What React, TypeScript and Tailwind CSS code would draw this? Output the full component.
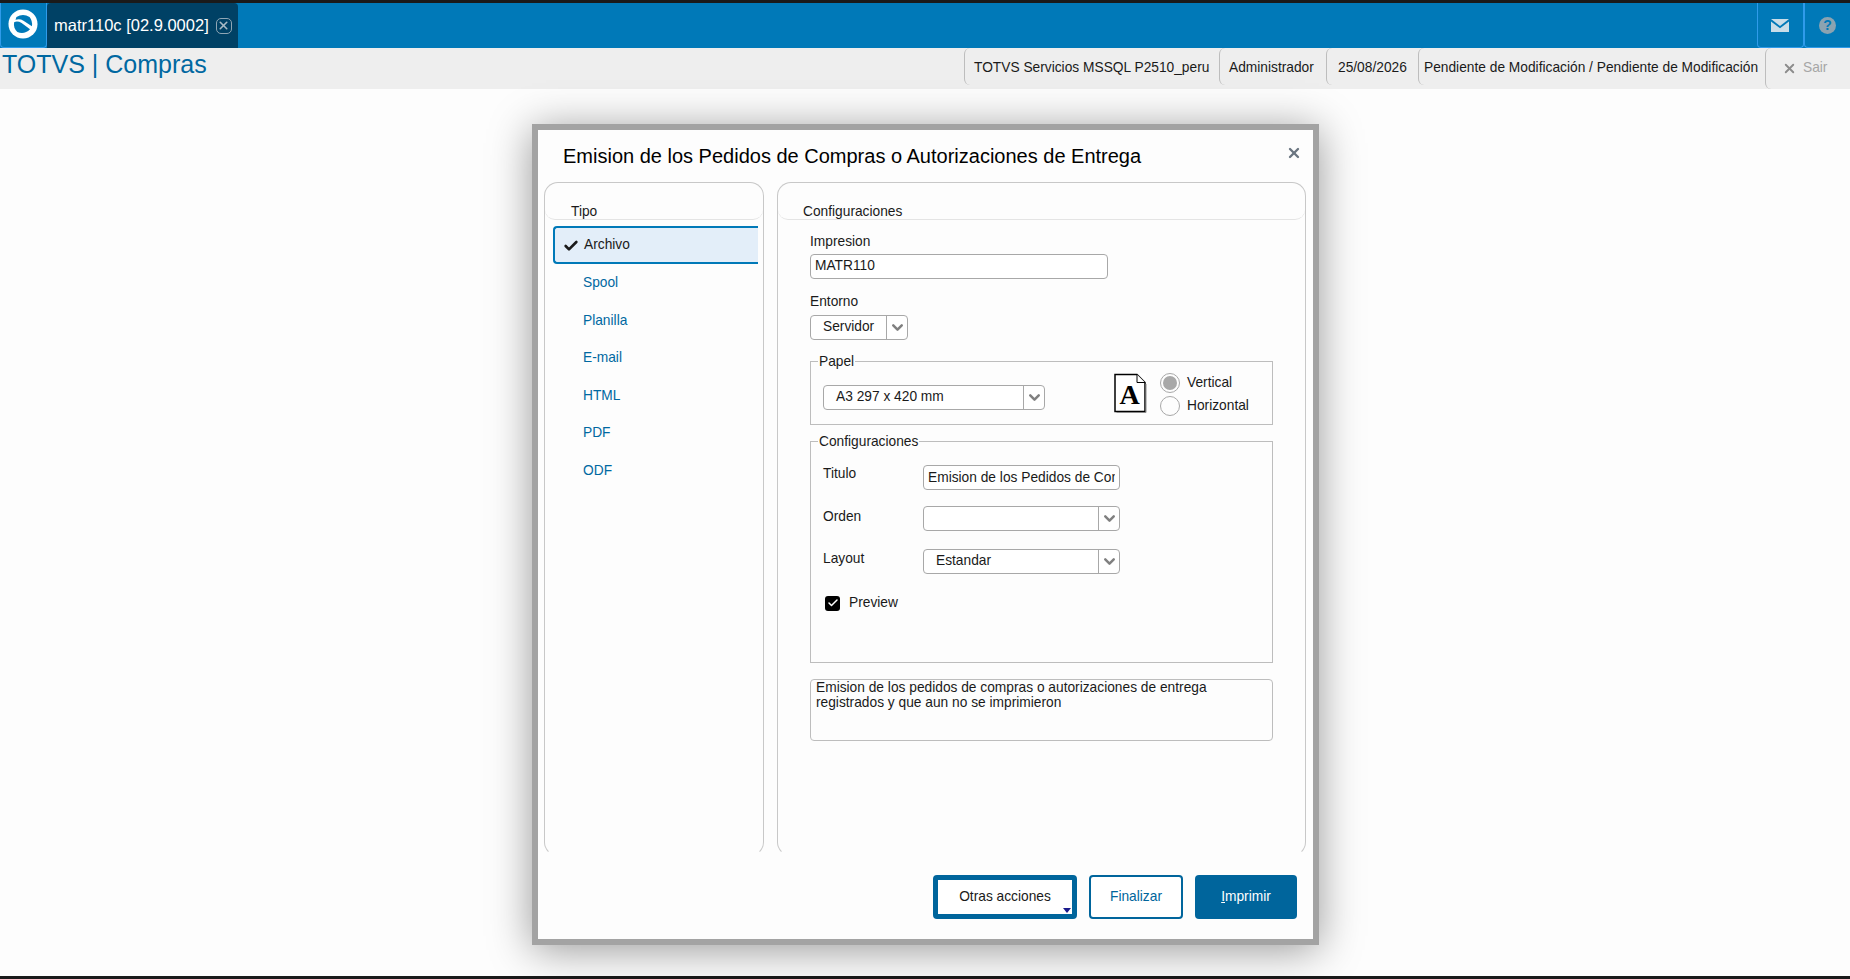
import { Check, ChevronDown, X } from 'lucide-react'

const TIPOS = ['Spool', 'Planilla', 'E-mail', 'HTML', 'PDF', 'ODF']
const INFO = [
  { text: 'TOTVS Servicios MSSQL P2510_peru', w: 'w-[255px]', pad: 'pl-[9px]' },
  { text: 'Administrador', w: 'w-[107px]', pad: 'pl-[9px]' },
  { text: '25/08/2026', w: 'w-[92px]', pad: 'pl-[11px]' },
  { text: 'Pendiente de Modificación / Pendiente de Modificación', w: 'w-[347px]', pad: 'pl-[5px]' },
]

function Combo({ value, w, arrow = 'w-[21px]', pad = 'pl-[12px]' }: { value: string; w: string; arrow?: string; pad?: string }) {
  return (
    <div className={`flex h-[25px] items-stretch rounded-[4px] border border-[#a8a8a8] bg-white ${w}`}>
      <div className={`flex min-w-0 flex-1 items-center text-[#1a1a1a] ${pad}`}>{value}</div>
      <div className={`flex items-center justify-center border-l border-[#a8a8a8] ${arrow}`}>
        <ChevronDown className="size-[17px] text-[#808080]" strokeWidth={3.5} />
      </div>
    </div>
  )
}

function PaperIcon() {
  return (
    <svg width="37" height="41" viewBox="0 0 37 41" className="shrink-0">
      <path d="M1 0H33V40H1Z" fill="#fff" />
      <path d="M2 1.500H24L32 9.500V38.500H2Z" fill="#fff" stroke="#000" strokeWidth="1.500" />
      <path d="M3.500 39.500H33V11" fill="none" stroke="#8a8a8a" strokeWidth="1" />
      <path d="M24 1.500V9.500H32" fill="#fff" stroke="#000" strokeWidth="1" />
      <text x="16.500" y="31" textAnchor="middle" fontFamily="'Liberation Serif', serif" fontWeight="bold" fontSize="28" fill="#000">A</text>
    </svg>
  )
}

export default function App() {
  return (
    <div className="relative flex h-[979px] w-[1850px] flex-col overflow-hidden bg-[#1a1a1a] font-['Liberation_Sans',Arial,sans-serif] text-[13.75px]">

      {/* Top bar */}
      <div className="mt-[3px] flex h-[45px] shrink-0 items-stretch bg-[#0079b8]">
        <div className="flex w-[47px] items-center justify-center rounded-b-[4px] border-x border-b border-[#2f9bea]">
          <svg width="30" height="30" viewBox="0 0 32 32" className="mb-[3px] mr-[2px]">
            <circle cx="16" cy="16" r="15.500" fill="#fff" />
            <path d="M9 8.500Q16 4.500 23 8.500Q26.500 13 25.500 18.500L16.500 12.500Q12.500 10 8 11.500Z" fill="#0079b8" />
            <path d="M6.500 14Q10.500 12.500 14.500 15L23.500 21.500Q17.500 27.500 10 24.500Q5.500 20 6.500 14Z" fill="#0079b8" />
          </svg>
        </div>
        <div className="flex w-[191px] items-center rounded-t-[4px] bg-[#004165] pl-[7px] text-[16.500px] text-white">
          <span>matr110c [02.9.0002]</span>
          <span className="ml-[7px] flex size-[16px] items-center justify-center rounded-[5px] border border-[#8fa6b5]">
            <X className="size-[13px] text-[#a9bac5]" strokeWidth={3} />
          </span>
        </div>
        <div className="flex-1" />
        <div className="flex w-[47px] items-center justify-center rounded-b-[4px] border-x border-b border-[#2f9bea] pr-[2px]">
          <svg width="18" height="13" viewBox="0 0 18 13">
            <path d="M0 0H18L9 7Z" fill="#c9dde8" />
            <path d="M0 2.500L9 9.200L18 2.500V13H0Z" fill="#c9dde8" />
          </svg>
        </div>
        <div className="flex w-[46px] items-center justify-center rounded-bl-[4px] border-b border-l border-[#2f9bea]">
          <span className="flex size-[17px] items-center justify-center rounded-full bg-[#8ba3b1] text-[14px] font-bold text-[#0079b8]">?</span>
        </div>
      </div>

      {/* Title bar */}
      <div className="flex h-[41px] shrink-0 items-stretch justify-between bg-[#eeeeee]">
        <div className="pl-[2px] pt-[2px] text-[25px] leading-[29px] text-[#0068a1]">TOTVS | Compras</div>
        <div className="flex items-stretch pb-[4px] text-[#1a1a1a]">
          {INFO.map(i => (
            <div key={i.text} className={`flex items-center whitespace-nowrap rounded-l-[6px] border-l border-[#bdbdbd] pt-[4px] ${i.w} ${i.pad}`}>{i.text}</div>
          ))}
          <div className="-mb-[4px] flex w-[85px] items-center gap-[6px] rounded-l-[6px] border-l border-[#bdbdbd] pl-[16px] text-[#a6a6a6]">
            <X className="size-[15px] text-[#8c8c8c]" strokeWidth={3} />
            <span>Sair</span>
          </div>
        </div>
      </div>

      {/* Page */}
      <div className="flex h-[887px] shrink-0 flex-col bg-[#fdfdfd] pl-[532px] pt-[35px]">
        <div className="flex h-[821px] w-[787px] flex-col border-[6px] border-[#a3a3a3] bg-[#fdfdfd] shadow-[0_5px_40px_rgba(0,0,0,0.4)]">

          <div className="flex h-[52px] shrink-0 items-center justify-between pl-[25px] pr-[11px]">
            <h1 className="text-[20px] text-black">Emision de los Pedidos de Compras o Autorizaciones de Entrega</h1>
            <X className="mb-[7px] size-[16px] text-[#6a7580]" strokeWidth={3.500} />
          </div>

          <div className="flex h-[674px] shrink-0 gap-[13px] pl-[6px]">

            {/* Tipo */}
            <div className="w-[220px] rounded-[14px] border border-[#c8c8c8] border-b-transparent">
              <div className="flex h-[37px] items-end rounded-b-[10px] border-b border-[#e4e4e4] pl-[26px] leading-[15px] text-[#1a1a1a]">Tipo</div>
              <div className="pl-[8px] pt-[6px]">
                <div className="flex h-[38px] w-[205px] items-center rounded-l-[4px] border-y-2 border-l-2 border-[#0079b8] bg-[#e3eef9] pt-[1px] text-[#1a1a1a]">
                  <Check className="ml-[8px] size-[16px] text-[#1a1a1a]" strokeWidth={4} />
                  <span className="ml-[5px]">Archivo</span>
                </div>
                <div className="pt-[1px]">
                  {TIPOS.map(t => (
                    <div key={t} className="flex h-[37.500px] items-center pl-[30px] text-[#0068a1]">{t}</div>
                  ))}
                </div>
              </div>
            </div>

            {/* Configuraciones */}
            <div className="w-[529px] rounded-[14px] border border-[#c8c8c8] border-b-transparent">
              <div className="flex h-[37px] items-end rounded-b-[10px] border-b border-[#e4e4e4] pl-[25px] leading-[15px] text-[#1a1a1a]">Configuraciones</div>
              <div className="pl-[32px] pt-[14px] text-[#1a1a1a]">
                <div className="leading-[16px]">Impresion</div>
                <div className="mt-[4px] flex h-[25px] w-[298px] items-center rounded-[4px] border border-[#a8a8a8] bg-white pl-[4px] text-[#1a1a1a]">MATR110</div>
                <div className="mt-[15px] leading-[16px]">Entorno</div>
                <div className="mt-[5px]"><Combo value="Servidor" w="w-[98px]" /></div>

                <fieldset className="mt-[14px] h-[71px] w-[463px] border border-[#bdbdbd] pl-[12px]">
                  <legend className="-ml-[5px] px-[1px] leading-[15px]">Papel</legend>
                  <div className="mt-[7px] flex items-start">
                    <div className="mt-[9px]"><Combo value="A3 297 x 420 mm" w="w-[222px]" /></div>
                    <div className="ml-[68px] -mt-[3px]"><PaperIcon /></div>
                    <div className="-mt-[3px] ml-[10px] flex flex-col gap-[3px]">
                      <div className="flex h-[20px] items-center gap-[7px]">
                        <span className="flex size-[20px] items-center justify-center rounded-full border border-[#a8a8a8]">
                          <span className="size-[14px] rounded-full bg-[#a8a8a8]" />
                        </span>
                        Vertical
                      </div>
                      <div className="flex h-[20px] items-center gap-[7px]">
                        <span className="size-[20px] rounded-full border border-[#a8a8a8]" />
                        Horizontal
                      </div>
                    </div>
                  </div>
                </fieldset>

                <fieldset className="mt-[9px] h-[229px] w-[463px] border border-[#bdbdbd] pl-[12px]">
                  <legend className="-ml-[5px] px-[1px] leading-[15px]">Configuraciones</legend>
                  <div className="mt-[16px] flex h-[25px] items-start">
                    <div className="w-[100px] pt-[1px] leading-[16px]">Titulo</div>
                    <input
                      readOnly
                      value="Emision de los Pedidos de Compras o Autorizaciones de Entrega"
                      className="h-[25px] w-[197px] rounded-[4px] border border-[#a8a8a8] bg-white px-[4px] text-[#1a1a1a] outline-none"
                    />
                  </div>
                  <div className="mt-[16px] flex h-[25px] items-start">
                    <div className="w-[100px] pt-[3px] leading-[16px]">Orden</div>
                    <Combo value="" w="w-[197px]" />
                  </div>
                  <div className="mt-[18px] flex h-[25px] items-start">
                    <div className="w-[100px] pt-[2px] leading-[16px]">Layout</div>
                    <Combo value="Estandar" w="w-[197px]" />
                  </div>
                  <div className="mt-[19px] flex items-center pl-[2px]">
                    <span className="flex size-[15px] items-center justify-center rounded-[3px] bg-black">
                      <Check className="size-[12px] text-white" strokeWidth={3} />
                    </span>
                    <span className="ml-[9px]">Preview</span>
                  </div>
                </fieldset>

                <div className="mt-[16px] h-[62px] w-[463px] whitespace-pre-line rounded-[4px] border border-[#bdbdbd] pl-[5px] leading-[15px]">
                  {'Emision de los pedidos de compras o autorizaciones de entrega\nregistrados y que aun no se imprimieron'}
                </div>
              </div>
            </div>
          </div>

          {/* Actions */}
          <div className="flex justify-end gap-[12px] pr-[16px] pt-[19px]">
            <button className="relative h-[44px] w-[144px] rounded-[4px] border-[5px] border-[#00659c] bg-white text-[#1a1a1a]">
              Otras acciones
              <span className="absolute bottom-[1px] right-[1px] h-0 w-0 border-x-[4px] border-t-[5px] border-x-transparent border-t-[#1a1a8c]" />
            </button>
            <button className="h-[44px] w-[94px] rounded-[4px] border-2 border-[#00659c] bg-white text-[#00659c]">Finalizar</button>
            <button className="h-[44px] w-[102px] rounded-[4px] bg-[#00659c] text-white"><span className="underline">I</span>mprimir</button>
          </div>
        </div>
      </div>
    </div>
  )
}
